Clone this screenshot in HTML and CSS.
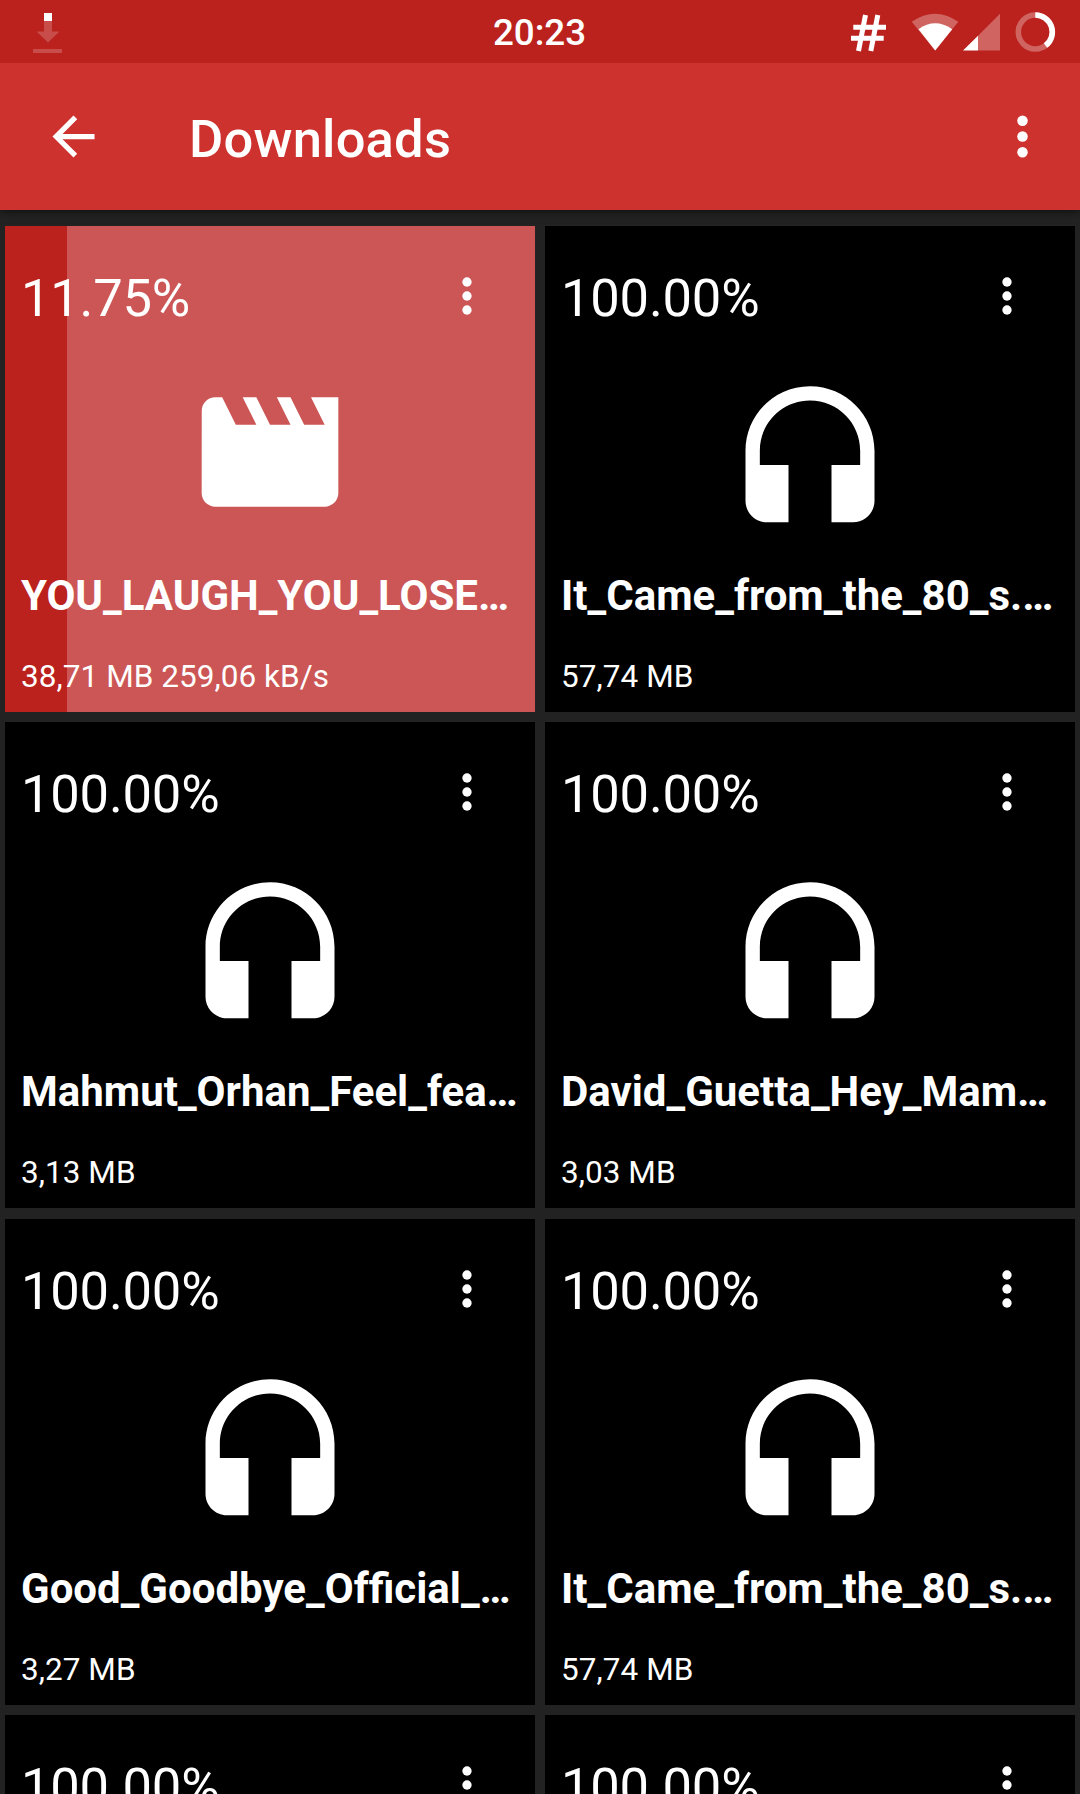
FILE: index.html
```
<!DOCTYPE html>
<html lang="en">
<head>
<meta charset="utf-8">
<title>Downloads</title>
<link rel="stylesheet" href="styles.css">
</head>
<body>
<svg class="defs" aria-hidden="true">
  <symbol id="headset" viewBox="0 0 24 24"><path d="M12 1c-4.97 0-9 4.03-9 9v7c0 1.66 1.34 3 3 3h3v-8H5v-2c0-3.87 3.13-7 7-7s7 3.13 7 7v2h-4v8h3c1.66 0 3-1.34 3-3v-7c0-4.97-4.03-9-9-9z"/></symbol>
  <symbol id="movie" viewBox="0 0 24 24"><path d="M18 4l2 4h-3l-2-4h-2l2 4h-3l-2-4H8l2 4H7L5 4H4c-1.1 0-1.99.9-1.99 2L2 18c0 1.1.9 2 2 2h16c1.1 0 2-.9 2-2V4h-4z"/></symbol>
  <symbol id="more" viewBox="0 0 24 24"><circle cx="12" cy="6" r="2"/><circle cx="12" cy="12" r="2"/><circle cx="12" cy="18" r="2"/></symbol>
</svg>
<div class="screen">
  <header class="status">
    <svg class="status-left" viewBox="0 0 80 63">
      <path class="dim-dl" d="M44 20h8v10.5h7.5L48 41.5 36.500 30.500H44zM33 48h29v4H33z"/>
      <path d="M44 12h8v8h-8z"/>
    </svg>
    <span class="clock">20:23</span>
    <svg class="status-right" viewBox="840 0 240 63">
      <path class="hash" d="M865.500 14L858.500 50M877.800 14L870.800 50M853.300 26.300H886M851 37.300H883.700"/>
      <path class="dim" d="M911.700 20.700Q935 4.700 958.300 20.700L935.200 49.500z"/>
      <path d="M918.500 28.200Q935 16.400 952.200 28.200L935.200 49.500z"/>
      <path class="dim" d="M978 34.800L1000 12.700V49.500H978z"/>
      <path d="M963 49.500L978 34.800V49.500z"/>
      <circle class="ring ring-rest" cx="1035.300" cy="31" r="17"/>
      <path class="ring" d="M1035.300 14A17 17 0 0 1 1045.500 44.600"/>
    </svg>
  </header>
  <nav class="appbar">
    <svg class="back" viewBox="0 0 24 24"><path d="M20 11H7.830l5.590-5.590L12 4l-8 8 8 8 1.410-1.410L7.830 13H20v-2z"/></svg>
    <h1 class="heading">Downloads</h1>
    <svg class="menu" viewBox="0 0 24 24"><use href="#more"/></svg>
  </nav>
  <main class="grid">
    <article class="card active">
      <div class="progress" style="width:11.75%"></div>
      <div class="top"><span class="percent">11.75%</span><svg class="more"><use href="#more"/></svg></div>
      <div class="art"><svg class="movie"><use href="#movie"/></svg></div>
      <h2 class="name">YOU_LAUGH_YOU_LOSE…</h2>
      <p class="meta">38,71 MB 259,06 kB/s</p>
    </article>
    <article class="card">
      <div class="top"><span class="percent">100.00%</span><svg class="more"><use href="#more"/></svg></div>
      <div class="art"><svg class="headset"><use href="#headset"/></svg></div>
      <h2 class="name">It_Came_from_the_80_s.…</h2>
      <p class="meta">57,74 MB</p>
    </article>
    <article class="card">
      <div class="top"><span class="percent">100.00%</span><svg class="more"><use href="#more"/></svg></div>
      <div class="art"><svg class="headset"><use href="#headset"/></svg></div>
      <h2 class="name">Mahmut_Orhan_Feel_fea…</h2>
      <p class="meta">3,13 MB</p>
    </article>
    <article class="card">
      <div class="top"><span class="percent">100.00%</span><svg class="more"><use href="#more"/></svg></div>
      <div class="art"><svg class="headset"><use href="#headset"/></svg></div>
      <h2 class="name">David_Guetta_Hey_Mam…</h2>
      <p class="meta">3,03 MB</p>
    </article>
    <article class="card">
      <div class="top"><span class="percent">100.00%</span><svg class="more"><use href="#more"/></svg></div>
      <div class="art"><svg class="headset"><use href="#headset"/></svg></div>
      <h2 class="name">Good_Goodbye_Of&zwnj;ficial_…</h2>
      <p class="meta">3,27 MB</p>
    </article>
    <article class="card">
      <div class="top"><span class="percent">100.00%</span><svg class="more"><use href="#more"/></svg></div>
      <div class="art"><svg class="headset"><use href="#headset"/></svg></div>
      <h2 class="name">It_Came_from_the_80_s.…</h2>
      <p class="meta">57,74 MB</p>
    </article>
    <article class="card">
      <div class="top"><span class="percent">100.00%</span><svg class="more"><use href="#more"/></svg></div>
    </article>
    <article class="card">
      <div class="top"><span class="percent">100.00%</span><svg class="more"><use href="#more"/></svg></div>
    </article>
  </main>
</div>
</body>
</html>
```

FILE: styles.css
```
* { box-sizing: border-box; margin: 0; padding: 0; }
body {
  background: #222;
  color: #fff;
  font-family: Roboto, "Liberation Sans", sans-serif;
  overflow: hidden;
}
svg { display: block; flex: none; fill: #fff; }
.defs { display: none; }
.screen { width: 1080px; height: 1794px; overflow: hidden; }

.status {
  height: 63px;
  background: #bb211d;
  display: grid;
  grid-template-columns: 240px 1fr 240px;
  align-items: center;
  position: relative;
  z-index: 1;
}
.status-left { width: 80px; height: 63px; }
.status-right { width: 240px; height: 63px; }
.clock { text-align: center; font-size: 36.75px; font-weight: 500; line-height: 63px; padding: 1px 1px 0 0; }
.dim { opacity: .3; }
.dim-dl { opacity: .2; }
.hash { stroke-width: 5; }
.hash, .ring { fill: none; stroke: #fff; }
.ring { stroke-width: 5.6px; }
.ring-rest { opacity: .3; }

.appbar {
  height: 147px;
  background: #cd322e;
  display: flex;
  align-items: center;
  padding: 0 26px 0 42px;
  position: relative;
  box-shadow: 0 1px 9px rgba(0, 0, 0, .6);
}
.back, .menu { width: 63px; height: 63px; }
.heading { flex: 1; margin-left: 84px; font-size: 52.5px; font-weight: 500; line-height: 62px; letter-spacing: .2px; padding-top: 4px; }

.grid {
  display: grid;
  grid-template-columns: 530px 530px;
  grid-auto-rows: 486px;
  gap: 10.4px 10px;
  padding: 16px 5px 0;
}
.card { background: #000; position: relative; padding: 41px 16px 0; }
.active { background: #cc5655; }
.progress { position: absolute; left: 0; top: 0; bottom: 0; background: #bb211d; }
.top { position: relative; display: flex; justify-content: space-between; height: 62px; }
.percent { font-size: 52.5px; line-height: 62px; letter-spacing: -.2px; }
.more { width: 56px; height: 56px; margin: 1px 24px 0 0; }
.art { position: relative; height: 228px; padding-top: 50px; display: flex; justify-content: center; }
.headset { width: 172px; height: 172px; }
.movie { width: 164px; height: 164px; margin-top: -9px; }
.name { position: relative; font-size: 42px; font-weight: 700; line-height: 50px; height: 50px; margin-top: 14px; white-space: nowrap; }
.meta { position: relative; font-size: 31.5px; line-height: 38px; letter-spacing: .05px; margin-top: 37px; }
```
